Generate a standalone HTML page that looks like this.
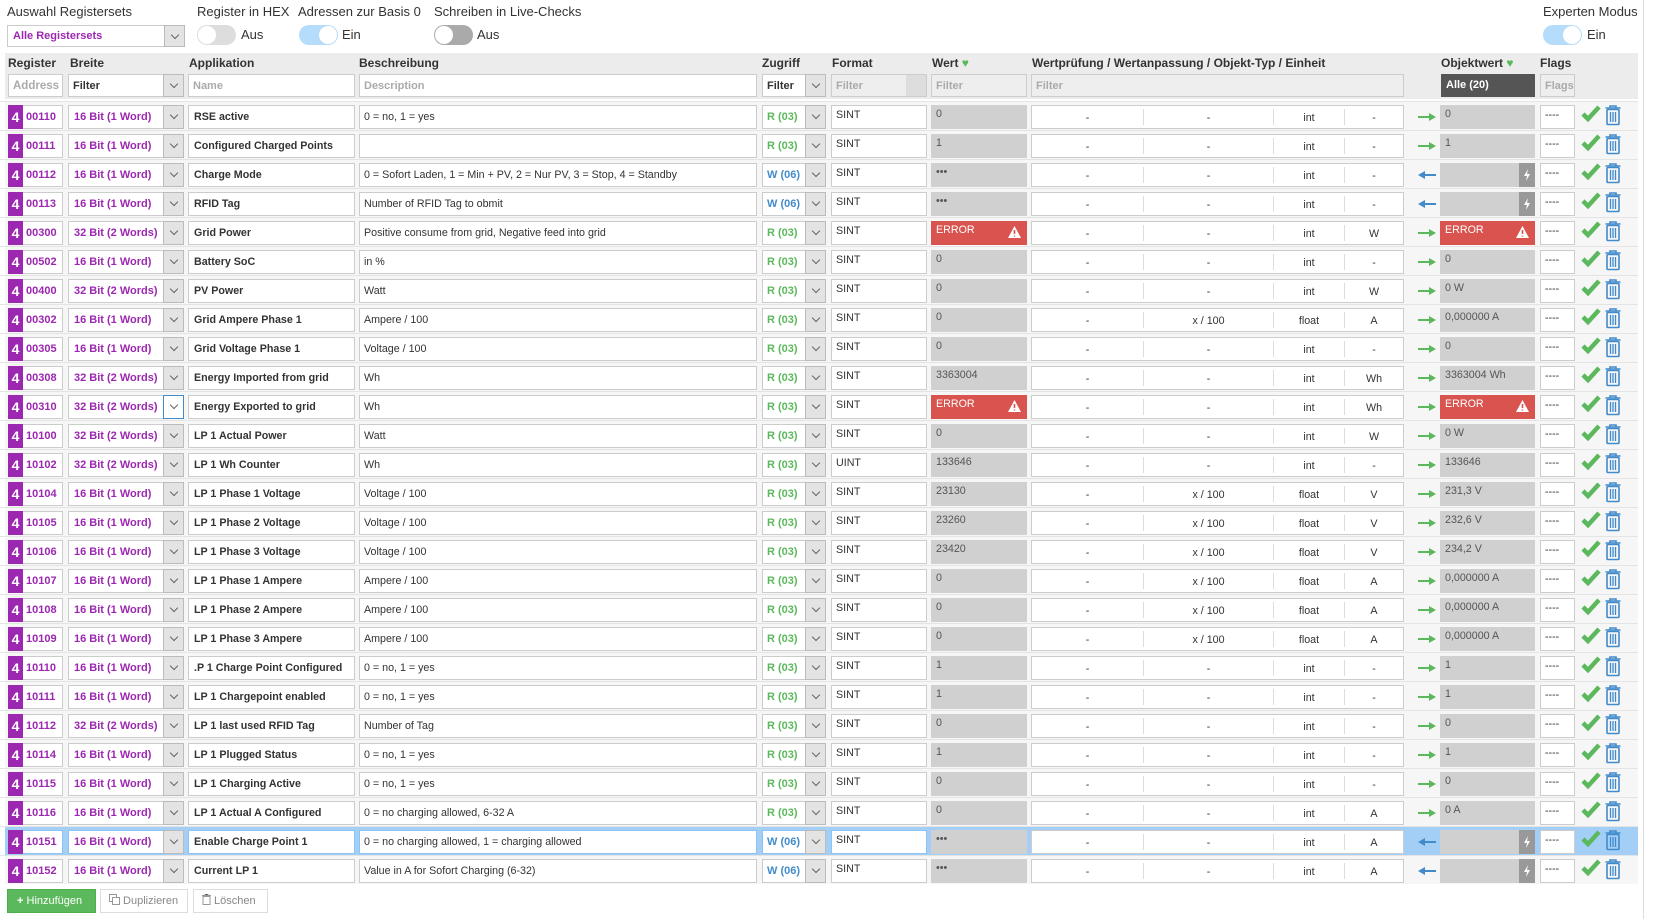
<!DOCTYPE html>
<html><head><meta charset="utf-8"><style>
*{box-sizing:border-box;margin:0;padding:0}
body{width:1655px;height:919px;background:#fff;font-family:"Liberation Sans",Arial,sans-serif;color:#333;position:relative;overflow:hidden}
.a{position:absolute}
.lbl{position:absolute;font-size:13px;color:#333;top:4px}
.tg{position:absolute;width:39px;height:20px;border-radius:10px;top:25px}
.tg::after{content:"";position:absolute;top:1px;width:18px;height:18px;border-radius:50%;background:#fff}
.off{background:#ddd}.off::after{left:1px}
.on{background:#b5dcfb}.on::after{right:1px}
.dk{background:#aaa}.dk::after{left:1px}
.tt{position:absolute;top:27px;font-size:13px}
.hdr{position:absolute;left:5px;top:53px;width:1633px;height:46px;background:#ececec}
.hl{position:absolute;top:56px;font-size:12px;font-weight:bold;color:#333}
.hf{position:absolute;top:74px;height:23px;border:1px solid #ccc;background:#fff;font-size:11px;color:#aaa;padding:5px 4px;font-weight:bold}
.r{position:absolute;left:0;width:1638px;height:29px;background:linear-gradient(to right,#fff 5px,#f6f6f6 5px);border-top:1px solid #e4e4e4}
.r i,.r div{position:absolute;top:3px;height:24px;font-style:normal;font-size:10.7px;white-space:nowrap;overflow:hidden}
.b{left:8px;width:15px;background:#9c27b0;color:#fff;font-weight:bold;font-size:14px!important;text-align:center;line-height:24px}
.ad{left:23px;width:40px;background:#fff;border:1px solid #ccc;border-left:none;color:#9c27b0;font-weight:bold;line-height:22px;padding-left:3px;font-size:11px!important}
.br{left:68px;width:96px;background:#fff;border:1px solid #ccc;color:#9c27b0;font-weight:bold;line-height:22px;padding-left:5px;font-size:11px!important}
.sa,.sb{background:#e3e3e3;border:1px solid #bbb;width:21px}
.sa{left:163px}.sb{left:805px}
.sa::after,.sb::after,.hs::after{content:"";position:absolute;left:7px;top:6px;width:5px;height:5px;border-right:1px solid #666;border-bottom:1px solid #666;transform:rotate(45deg)}
.ap{left:188px;width:167px;background:#fff;border:1px solid #ccc;font-weight:bold;line-height:22px;padding-left:5px;color:#333}
.de{left:359px;width:398px;background:#fff;border:1px solid #ccc;line-height:22px;padding-left:4px}
.zu{left:762px;width:44px;background:#fff;border:1px solid #ccc;font-weight:bold;line-height:22px;padding-left:4px;font-size:11px!important}
.g{color:#5cb85c}.bl{color:#428bca}
.fo{left:831px;width:96px;background:#fff;border:1px solid #ccc;padding:3px 0 0 4px}
.we{left:931px;width:96px;background:#d0d0d0;color:#555;padding:3px 0 0 5px}
.er{background:#d9534f!important;color:#fff!important}
.wp{left:1031px;width:373px;background:#fff;border:1px solid #ccc}
.wp b{position:absolute;top:3px;height:16px;font-weight:normal;text-align:center;line-height:18px;border-right:1px solid #ddd}
.wp b:nth-child(1){left:0;width:112px}.wp b:nth-child(2){left:112px;width:130px}.wp b:nth-child(3){left:242px;width:71px}.wp b:nth-child(4){left:313px;width:58px;border:none}
.ar{left:1418px;width:18px}
.ar::before{content:"";position:absolute;left:0;top:11px;width:13px;height:2px;background:currentColor}
.ar::after{content:"";position:absolute;left:11px;top:8px;border-left:7px solid currentColor;border-top:4px solid transparent;border-bottom:4px solid transparent}
.lf{transform:scaleX(-1)}
.ob{left:1440px;width:95px;background:#d0d0d0;color:#555;padding:3px 0 0 5px}
.lt{position:absolute;right:0;top:0;width:16px;height:24px;background:#999}
.fl{left:1540px;width:35px;background:#fff;border:1px solid #ccc;padding:3px 0 0 4px}
.ck{left:1580px;width:22px}
.tr{left:1604px;width:18px}
.sel{background:linear-gradient(to right,#fff 5px,#a3cff7 5px)}
.sel .ad,.sel .br,.sel .ap,.sel .de,.sel .zu,.sel .fo,.sel .we{border-color:#8cc3f2}
.btn{position:absolute;top:889px;height:24px;font-size:11px;border:1px solid #ddd;color:#888;line-height:22px;padding-left:8px;white-space:nowrap}
</style></head><body>
<svg width="0" height="0" style="position:absolute"><defs>
<symbol id="ck" viewBox="0 0 22 24"><path d="M3 10l5 5L19 3" fill="none" stroke="#5cb85c" stroke-width="4.5"/></symbol>
<symbol id="tr" viewBox="0 0 18 24"><path d="M6 3.5V2h6v1.5M1.5 4h15" fill="none" stroke="#428bca" stroke-width="1.6"/><rect x="3" y="5.5" width="12" height="15" rx="1" fill="none" stroke="#428bca" stroke-width="1.6"/><path d="M6.5 8v10M9 8v10M11.5 8v10" stroke="#428bca" stroke-width="1.3"/></symbol>
<symbol id="lt" viewBox="0 0 16 24"><path d="M9 6l-4 7h3l-1 5 4-7H8z" fill="#fff"/></symbol>
<symbol id="wa" viewBox="0 0 13 12"><path d="M6.5 0L13 12H0z" fill="#fff"/><path d="M6.5 4v4M6.5 9.5v1" stroke="#d9534f" stroke-width="1.6"/></symbol>
</defs></svg>
<div class="lbl" style="left:7px">Auswahl Registersets</div>
<div class="a" style="left:7px;top:25px;width:178px;height:22px;border:1px solid #ccc;font-size:11px;font-weight:bold;color:#9c27b0;padding:4px 5px">Alle Registersets</div>
<div class="a hs" style="left:164px;top:25px;width:21px;height:22px;background:#e3e3e3;border:1px solid #bbb"></div>
<div class="lbl" style="left:197px">Register in HEX</div>
<div class="tg off" style="left:197px"></div><div class="tt" style="left:241px">Aus</div>
<div class="lbl" style="left:298px">Adressen zur Basis 0</div>
<div class="tg on" style="left:299px"></div><div class="tt" style="left:342px">Ein</div>
<div class="lbl" style="left:434px">Schreiben in Live-Checks</div>
<div class="tg dk" style="left:434px"></div><div class="tt" style="left:477px">Aus</div>
<div class="lbl" style="left:1543px">Experten Modus</div>
<div class="tg on" style="left:1543px"></div><div class="tt" style="left:1587px">Ein</div>

<div class="hdr"></div>
<div class="hl" style="left:8px">Register</div>
<div class="hl" style="left:70px">Breite</div>
<div class="hl" style="left:189px">Applikation</div>
<div class="hl" style="left:359px">Beschreibung</div>
<div class="hl" style="left:762px">Zugriff</div>
<div class="hl" style="left:832px">Format</div>
<div class="hl" style="left:932px">Wert <span style="color:#5cb85c">♥</span></div>
<div class="hl" style="left:1032px">Wertprüfung / Wertanpassung / Objekt-Typ / Einheit</div>
<div class="hl" style="left:1441px">Objektwert <span style="color:#5cb85c">♥</span></div>
<div class="hl" style="left:1540px">Flags</div>
<div class="hf" style="left:8px;width:55px;font-size:11.5px">Address</div>
<div class="hf" style="left:68px;width:116px;color:#333">Filter</div>
<div class="a hs" style="left:163px;top:74px;width:21px;height:23px;background:#e3e3e3;border:1px solid #bbb"></div>
<div class="hf" style="left:188px;width:167px">Name</div>
<div class="hf" style="left:359px;width:398px">Description</div>
<div class="hf" style="left:762px;width:64px;color:#333">Filter</div>
<div class="a hs" style="left:805px;top:74px;width:21px;height:23px;background:#e3e3e3;border:1px solid #bbb"></div>
<div class="hf" style="left:831px;width:96px;background:#eee">Filter</div>
<div class="a" style="left:906px;top:75px;width:20px;height:21px;background:#ddd"></div>
<div class="hf" style="left:931px;width:96px;background:#eee">Filter</div>
<div class="hf" style="left:1031px;width:373px;background:#eee">Filter</div>
<div class="hf" style="left:1441px;width:94px;background:#555;color:#fff;border-color:#555;padding-top:4px">Alle (20)</div>
<div class="hf" style="left:1540px;width:35px;background:#eee">Flags</div>

<div class="r" style="top:101px"><i class="b">4</i><i class="ad">00110</i><i class="br">16 Bit (1 Word)</i><i class="sa"></i><i class="ap">RSE active</i><i class="de">0 = no, 1 = yes</i><i class="zu g">R (03)</i><i class="sb"></i><i class="fo">SINT</i><i class="we">0</i><div class="wp"><b>-</b><b>-</b><b>int</b><b>-</b></div><i class="ar g"></i><i class="ob">0</i><i class="fl">----</i><svg class="a ck" style="top:2px" width="22" height="24"><use href="#ck"/></svg><svg class="a tr" style="top:2px" width="18" height="24"><use href="#tr"/></svg></div>
<div class="r" style="top:130px"><i class="b">4</i><i class="ad">00111</i><i class="br">16 Bit (1 Word)</i><i class="sa"></i><i class="ap">Configured Charged Points</i><i class="de"></i><i class="zu g">R (03)</i><i class="sb"></i><i class="fo">SINT</i><i class="we">1</i><div class="wp"><b>-</b><b>-</b><b>int</b><b>-</b></div><i class="ar g"></i><i class="ob">1</i><i class="fl">----</i><svg class="a ck" style="top:2px" width="22" height="24"><use href="#ck"/></svg><svg class="a tr" style="top:2px" width="18" height="24"><use href="#tr"/></svg></div>
<div class="r" style="top:159px"><i class="b">4</i><i class="ad">00112</i><i class="br">16 Bit (1 Word)</i><i class="sa"></i><i class="ap">Charge Mode</i><i class="de">0 = Sofort Laden, 1 = Min + PV, 2 = Nur PV, 3 = Stop, 4 = Standby</i><i class="zu bl">W (06)</i><i class="sb"></i><i class="fo">SINT</i><i class="we">•••</i><div class="wp"><b>-</b><b>-</b><b>int</b><b>-</b></div><i class="ar bl lf"></i><i class="ob"><svg class="lt"><use href="#lt"/></svg></i><i class="fl">----</i><svg class="a ck" style="top:2px" width="22" height="24"><use href="#ck"/></svg><svg class="a tr" style="top:2px" width="18" height="24"><use href="#tr"/></svg></div>
<div class="r" style="top:188px"><i class="b">4</i><i class="ad">00113</i><i class="br">16 Bit (1 Word)</i><i class="sa"></i><i class="ap">RFID Tag</i><i class="de">Number of RFID Tag to obmit</i><i class="zu bl">W (06)</i><i class="sb"></i><i class="fo">SINT</i><i class="we">•••</i><div class="wp"><b>-</b><b>-</b><b>int</b><b>-</b></div><i class="ar bl lf"></i><i class="ob"><svg class="lt"><use href="#lt"/></svg></i><i class="fl">----</i><svg class="a ck" style="top:2px" width="22" height="24"><use href="#ck"/></svg><svg class="a tr" style="top:2px" width="18" height="24"><use href="#tr"/></svg></div>
<div class="r" style="top:217px"><i class="b">4</i><i class="ad">00300</i><i class="br">32 Bit (2 Words)</i><i class="sa"></i><i class="ap">Grid Power</i><i class="de">Positive consume from grid, Negative feed into grid</i><i class="zu g">R (03)</i><i class="sb"></i><i class="fo">SINT</i><i class="we er">ERROR<svg style="position:absolute;right:6px;top:5px" width="13" height="12"><use href="#wa"/></svg></i><div class="wp"><b>-</b><b>-</b><b>int</b><b>W</b></div><i class="ar g"></i><i class="ob er">ERROR<svg style="position:absolute;right:6px;top:5px" width="13" height="12"><use href="#wa"/></svg></i><i class="fl">----</i><svg class="a ck" style="top:2px" width="22" height="24"><use href="#ck"/></svg><svg class="a tr" style="top:2px" width="18" height="24"><use href="#tr"/></svg></div>
<div class="r" style="top:246px"><i class="b">4</i><i class="ad">00502</i><i class="br">16 Bit (1 Word)</i><i class="sa"></i><i class="ap">Battery SoC</i><i class="de">in %</i><i class="zu g">R (03)</i><i class="sb"></i><i class="fo">SINT</i><i class="we">0</i><div class="wp"><b>-</b><b>-</b><b>int</b><b>-</b></div><i class="ar g"></i><i class="ob">0</i><i class="fl">----</i><svg class="a ck" style="top:2px" width="22" height="24"><use href="#ck"/></svg><svg class="a tr" style="top:2px" width="18" height="24"><use href="#tr"/></svg></div>
<div class="r" style="top:275px"><i class="b">4</i><i class="ad">00400</i><i class="br">32 Bit (2 Words)</i><i class="sa"></i><i class="ap">PV Power</i><i class="de">Watt</i><i class="zu g">R (03)</i><i class="sb"></i><i class="fo">SINT</i><i class="we">0</i><div class="wp"><b>-</b><b>-</b><b>int</b><b>W</b></div><i class="ar g"></i><i class="ob">0 W</i><i class="fl">----</i><svg class="a ck" style="top:2px" width="22" height="24"><use href="#ck"/></svg><svg class="a tr" style="top:2px" width="18" height="24"><use href="#tr"/></svg></div>
<div class="r" style="top:304px"><i class="b">4</i><i class="ad">00302</i><i class="br">16 Bit (1 Word)</i><i class="sa"></i><i class="ap">Grid Ampere Phase 1</i><i class="de">Ampere / 100</i><i class="zu g">R (03)</i><i class="sb"></i><i class="fo">SINT</i><i class="we">0</i><div class="wp"><b>-</b><b>x / 100</b><b>float</b><b>A</b></div><i class="ar g"></i><i class="ob">0,000000 A</i><i class="fl">----</i><svg class="a ck" style="top:2px" width="22" height="24"><use href="#ck"/></svg><svg class="a tr" style="top:2px" width="18" height="24"><use href="#tr"/></svg></div>
<div class="r" style="top:333px"><i class="b">4</i><i class="ad">00305</i><i class="br">16 Bit (1 Word)</i><i class="sa"></i><i class="ap">Grid Voltage Phase 1</i><i class="de">Voltage / 100</i><i class="zu g">R (03)</i><i class="sb"></i><i class="fo">SINT</i><i class="we">0</i><div class="wp"><b>-</b><b>-</b><b>int</b><b>-</b></div><i class="ar g"></i><i class="ob">0</i><i class="fl">----</i><svg class="a ck" style="top:2px" width="22" height="24"><use href="#ck"/></svg><svg class="a tr" style="top:2px" width="18" height="24"><use href="#tr"/></svg></div>
<div class="r" style="top:362px"><i class="b">4</i><i class="ad">00308</i><i class="br">32 Bit (2 Words)</i><i class="sa"></i><i class="ap">Energy Imported from grid</i><i class="de">Wh</i><i class="zu g">R (03)</i><i class="sb"></i><i class="fo">SINT</i><i class="we">3363004</i><div class="wp"><b>-</b><b>-</b><b>int</b><b>Wh</b></div><i class="ar g"></i><i class="ob">3363004 Wh</i><i class="fl">----</i><svg class="a ck" style="top:2px" width="22" height="24"><use href="#ck"/></svg><svg class="a tr" style="top:2px" width="18" height="24"><use href="#tr"/></svg></div>
<div class="r" style="top:391px"><i class="b">4</i><i class="ad">00310</i><i class="br">32 Bit (2 Words)</i><i class="sa" style="border-color:#428bca;background:#fff"></i><i class="ap">Energy Exported to grid</i><i class="de">Wh</i><i class="zu g">R (03)</i><i class="sb"></i><i class="fo">SINT</i><i class="we er">ERROR<svg style="position:absolute;right:6px;top:5px" width="13" height="12"><use href="#wa"/></svg></i><div class="wp"><b>-</b><b>-</b><b>int</b><b>Wh</b></div><i class="ar g"></i><i class="ob er">ERROR<svg style="position:absolute;right:6px;top:5px" width="13" height="12"><use href="#wa"/></svg></i><i class="fl">----</i><svg class="a ck" style="top:2px" width="22" height="24"><use href="#ck"/></svg><svg class="a tr" style="top:2px" width="18" height="24"><use href="#tr"/></svg></div>
<div class="r" style="top:420px"><i class="b">4</i><i class="ad">10100</i><i class="br">32 Bit (2 Words)</i><i class="sa"></i><i class="ap">LP 1 Actual Power</i><i class="de">Watt</i><i class="zu g">R (03)</i><i class="sb"></i><i class="fo">SINT</i><i class="we">0</i><div class="wp"><b>-</b><b>-</b><b>int</b><b>W</b></div><i class="ar g"></i><i class="ob">0 W</i><i class="fl">----</i><svg class="a ck" style="top:2px" width="22" height="24"><use href="#ck"/></svg><svg class="a tr" style="top:2px" width="18" height="24"><use href="#tr"/></svg></div>
<div class="r" style="top:449px"><i class="b">4</i><i class="ad">10102</i><i class="br">32 Bit (2 Words)</i><i class="sa"></i><i class="ap">LP 1 Wh Counter</i><i class="de">Wh</i><i class="zu g">R (03)</i><i class="sb"></i><i class="fo">UINT</i><i class="we">133646</i><div class="wp"><b>-</b><b>-</b><b>int</b><b>-</b></div><i class="ar g"></i><i class="ob">133646</i><i class="fl">----</i><svg class="a ck" style="top:2px" width="22" height="24"><use href="#ck"/></svg><svg class="a tr" style="top:2px" width="18" height="24"><use href="#tr"/></svg></div>
<div class="r" style="top:478px"><i class="b">4</i><i class="ad">10104</i><i class="br">16 Bit (1 Word)</i><i class="sa"></i><i class="ap">LP 1 Phase 1 Voltage</i><i class="de">Voltage / 100</i><i class="zu g">R (03)</i><i class="sb"></i><i class="fo">SINT</i><i class="we">23130</i><div class="wp"><b>-</b><b>x / 100</b><b>float</b><b>V</b></div><i class="ar g"></i><i class="ob">231,3 V</i><i class="fl">----</i><svg class="a ck" style="top:2px" width="22" height="24"><use href="#ck"/></svg><svg class="a tr" style="top:2px" width="18" height="24"><use href="#tr"/></svg></div>
<div class="r" style="top:507px"><i class="b">4</i><i class="ad">10105</i><i class="br">16 Bit (1 Word)</i><i class="sa"></i><i class="ap">LP 1 Phase 2 Voltage</i><i class="de">Voltage / 100</i><i class="zu g">R (03)</i><i class="sb"></i><i class="fo">SINT</i><i class="we">23260</i><div class="wp"><b>-</b><b>x / 100</b><b>float</b><b>V</b></div><i class="ar g"></i><i class="ob">232,6 V</i><i class="fl">----</i><svg class="a ck" style="top:2px" width="22" height="24"><use href="#ck"/></svg><svg class="a tr" style="top:2px" width="18" height="24"><use href="#tr"/></svg></div>
<div class="r" style="top:536px"><i class="b">4</i><i class="ad">10106</i><i class="br">16 Bit (1 Word)</i><i class="sa"></i><i class="ap">LP 1 Phase 3 Voltage</i><i class="de">Voltage / 100</i><i class="zu g">R (03)</i><i class="sb"></i><i class="fo">SINT</i><i class="we">23420</i><div class="wp"><b>-</b><b>x / 100</b><b>float</b><b>V</b></div><i class="ar g"></i><i class="ob">234,2 V</i><i class="fl">----</i><svg class="a ck" style="top:2px" width="22" height="24"><use href="#ck"/></svg><svg class="a tr" style="top:2px" width="18" height="24"><use href="#tr"/></svg></div>
<div class="r" style="top:565px"><i class="b">4</i><i class="ad">10107</i><i class="br">16 Bit (1 Word)</i><i class="sa"></i><i class="ap">LP 1 Phase 1 Ampere</i><i class="de">Ampere / 100</i><i class="zu g">R (03)</i><i class="sb"></i><i class="fo">SINT</i><i class="we">0</i><div class="wp"><b>-</b><b>x / 100</b><b>float</b><b>A</b></div><i class="ar g"></i><i class="ob">0,000000 A</i><i class="fl">----</i><svg class="a ck" style="top:2px" width="22" height="24"><use href="#ck"/></svg><svg class="a tr" style="top:2px" width="18" height="24"><use href="#tr"/></svg></div>
<div class="r" style="top:594px"><i class="b">4</i><i class="ad">10108</i><i class="br">16 Bit (1 Word)</i><i class="sa"></i><i class="ap">LP 1 Phase 2 Ampere</i><i class="de">Ampere / 100</i><i class="zu g">R (03)</i><i class="sb"></i><i class="fo">SINT</i><i class="we">0</i><div class="wp"><b>-</b><b>x / 100</b><b>float</b><b>A</b></div><i class="ar g"></i><i class="ob">0,000000 A</i><i class="fl">----</i><svg class="a ck" style="top:2px" width="22" height="24"><use href="#ck"/></svg><svg class="a tr" style="top:2px" width="18" height="24"><use href="#tr"/></svg></div>
<div class="r" style="top:623px"><i class="b">4</i><i class="ad">10109</i><i class="br">16 Bit (1 Word)</i><i class="sa"></i><i class="ap">LP 1 Phase 3 Ampere</i><i class="de">Ampere / 100</i><i class="zu g">R (03)</i><i class="sb"></i><i class="fo">SINT</i><i class="we">0</i><div class="wp"><b>-</b><b>x / 100</b><b>float</b><b>A</b></div><i class="ar g"></i><i class="ob">0,000000 A</i><i class="fl">----</i><svg class="a ck" style="top:2px" width="22" height="24"><use href="#ck"/></svg><svg class="a tr" style="top:2px" width="18" height="24"><use href="#tr"/></svg></div>
<div class="r" style="top:652px"><i class="b">4</i><i class="ad">10110</i><i class="br">16 Bit (1 Word)</i><i class="sa"></i><i class="ap">.P 1 Charge Point Configured</i><i class="de">0 = no, 1 = yes</i><i class="zu g">R (03)</i><i class="sb"></i><i class="fo">SINT</i><i class="we">1</i><div class="wp"><b>-</b><b>-</b><b>int</b><b>-</b></div><i class="ar g"></i><i class="ob">1</i><i class="fl">----</i><svg class="a ck" style="top:2px" width="22" height="24"><use href="#ck"/></svg><svg class="a tr" style="top:2px" width="18" height="24"><use href="#tr"/></svg></div>
<div class="r" style="top:681px"><i class="b">4</i><i class="ad">10111</i><i class="br">16 Bit (1 Word)</i><i class="sa"></i><i class="ap">LP 1 Chargepoint enabled</i><i class="de">0 = no, 1 = yes</i><i class="zu g">R (03)</i><i class="sb"></i><i class="fo">SINT</i><i class="we">1</i><div class="wp"><b>-</b><b>-</b><b>int</b><b>-</b></div><i class="ar g"></i><i class="ob">1</i><i class="fl">----</i><svg class="a ck" style="top:2px" width="22" height="24"><use href="#ck"/></svg><svg class="a tr" style="top:2px" width="18" height="24"><use href="#tr"/></svg></div>
<div class="r" style="top:710px"><i class="b">4</i><i class="ad">10112</i><i class="br">32 Bit (2 Words)</i><i class="sa"></i><i class="ap">LP 1 last used RFID Tag</i><i class="de">Number of Tag</i><i class="zu g">R (03)</i><i class="sb"></i><i class="fo">SINT</i><i class="we">0</i><div class="wp"><b>-</b><b>-</b><b>int</b><b>-</b></div><i class="ar g"></i><i class="ob">0</i><i class="fl">----</i><svg class="a ck" style="top:2px" width="22" height="24"><use href="#ck"/></svg><svg class="a tr" style="top:2px" width="18" height="24"><use href="#tr"/></svg></div>
<div class="r" style="top:739px"><i class="b">4</i><i class="ad">10114</i><i class="br">16 Bit (1 Word)</i><i class="sa"></i><i class="ap">LP 1 Plugged Status</i><i class="de">0 = no, 1 = yes</i><i class="zu g">R (03)</i><i class="sb"></i><i class="fo">SINT</i><i class="we">1</i><div class="wp"><b>-</b><b>-</b><b>int</b><b>-</b></div><i class="ar g"></i><i class="ob">1</i><i class="fl">----</i><svg class="a ck" style="top:2px" width="22" height="24"><use href="#ck"/></svg><svg class="a tr" style="top:2px" width="18" height="24"><use href="#tr"/></svg></div>
<div class="r" style="top:768px"><i class="b">4</i><i class="ad">10115</i><i class="br">16 Bit (1 Word)</i><i class="sa"></i><i class="ap">LP 1 Charging Active</i><i class="de">0 = no, 1 = yes</i><i class="zu g">R (03)</i><i class="sb"></i><i class="fo">SINT</i><i class="we">0</i><div class="wp"><b>-</b><b>-</b><b>int</b><b>-</b></div><i class="ar g"></i><i class="ob">0</i><i class="fl">----</i><svg class="a ck" style="top:2px" width="22" height="24"><use href="#ck"/></svg><svg class="a tr" style="top:2px" width="18" height="24"><use href="#tr"/></svg></div>
<div class="r" style="top:797px"><i class="b">4</i><i class="ad">10116</i><i class="br">16 Bit (1 Word)</i><i class="sa"></i><i class="ap">LP 1 Actual A Configured</i><i class="de">0 = no charging allowed, 6-32 A</i><i class="zu g">R (03)</i><i class="sb"></i><i class="fo">SINT</i><i class="we">0</i><div class="wp"><b>-</b><b>-</b><b>int</b><b>A</b></div><i class="ar g"></i><i class="ob">0 A</i><i class="fl">----</i><svg class="a ck" style="top:2px" width="22" height="24"><use href="#ck"/></svg><svg class="a tr" style="top:2px" width="18" height="24"><use href="#tr"/></svg></div>
<div class="r sel" style="top:826px"><i class="b">4</i><i class="ad">10151</i><i class="br">16 Bit (1 Word)</i><i class="sa"></i><i class="ap">Enable Charge Point 1</i><i class="de">0 = no charging allowed, 1 = charging allowed</i><i class="zu bl">W (06)</i><i class="sb"></i><i class="fo">SINT</i><i class="we">•••</i><div class="wp"><b>-</b><b>-</b><b>int</b><b>A</b></div><i class="ar bl lf"></i><i class="ob"><svg class="lt"><use href="#lt"/></svg></i><i class="fl">----</i><svg class="a ck" style="top:2px" width="22" height="24"><use href="#ck"/></svg><svg class="a tr" style="top:2px" width="18" height="24"><use href="#tr"/></svg></div>
<div class="r" style="top:855px"><i class="b">4</i><i class="ad">10152</i><i class="br">16 Bit (1 Word)</i><i class="sa"></i><i class="ap">Current LP 1</i><i class="de">Value in A for Sofort Charging (6-32)</i><i class="zu bl">W (06)</i><i class="sb"></i><i class="fo">SINT</i><i class="we">•••</i><div class="wp"><b>-</b><b>-</b><b>int</b><b>A</b></div><i class="ar bl lf"></i><i class="ob"><svg class="lt"><use href="#lt"/></svg></i><i class="fl">----</i><svg class="a ck" style="top:2px" width="22" height="24"><use href="#ck"/></svg><svg class="a tr" style="top:2px" width="18" height="24"><use href="#tr"/></svg></div>

<div class="btn" style="left:7px;width:89px;background:#5cb85c;border-color:#4cae4c;color:#fff;padding-left:9px"><b>+</b> Hinzufügen</div>
<div class="btn" style="left:100px;width:88px"><svg width="11" height="11" style="vertical-align:-1px"><rect x="0.5" y="0.5" width="7" height="7" fill="none" stroke="#999"/><rect x="3.5" y="3.5" width="7" height="7" fill="#fff" stroke="#999"/></svg> Duplizieren</div>
<div class="btn" style="left:193px;width:75px"><svg width="9" height="11" style="vertical-align:-1px"><path d="M0 1.5h9M3 1V0h3v1" stroke="#999"/><rect x="1" y="2.5" width="7" height="8" fill="none" stroke="#999"/></svg> Löschen</div>
<div class="a" style="left:1643px;top:0;width:1px;height:919px;background:#ddd"></div>
</body></html>
